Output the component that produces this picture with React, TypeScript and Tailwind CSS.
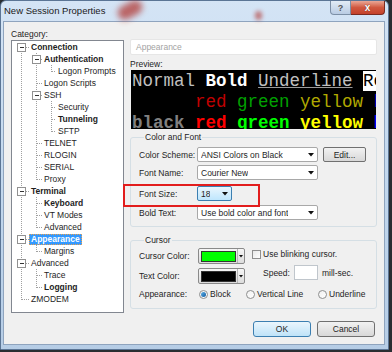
import React from "react";

type Node = {
  t: string;
  lvl: 1 | 2 | 3;
  bold?: boolean;
  exp?: boolean;
  sel?: boolean;
};

const tree: Node[] = [
  { t: "Connection", lvl: 1, bold: true, exp: true },
  { t: "Authentication", lvl: 2, bold: true, exp: true },
  { t: "Logon Prompts", lvl: 3 },
  { t: "Logon Scripts", lvl: 2 },
  { t: "SSH", lvl: 2, exp: true },
  { t: "Security", lvl: 3 },
  { t: "Tunneling", lvl: 3, bold: true },
  { t: "SFTP", lvl: 3 },
  { t: "TELNET", lvl: 2 },
  { t: "RLOGIN", lvl: 2 },
  { t: "SERIAL", lvl: 2 },
  { t: "Proxy", lvl: 2 },
  { t: "Terminal", lvl: 1, bold: true, exp: true },
  { t: "Keyboard", lvl: 2, bold: true },
  { t: "VT Modes", lvl: 2 },
  { t: "Advanced", lvl: 2 },
  { t: "Appearance", lvl: 1, bold: true, exp: true, sel: true },
  { t: "Margins", lvl: 2 },
  { t: "Advanced", lvl: 1, exp: true },
  { t: "Trace", lvl: 2 },
  { t: "Logging", lvl: 2, bold: true },
  { t: "ZMODEM", lvl: 1 },
];

const indent = { 1: "pl-[19px]", 2: "pl-[32px]", 3: "pl-[46px]" };
const lineX = { 1: 9, 2: 24, 3: 39 };
const textX = { 1: 19, 2: 32, 3: 46 };

// vertical guide lines: [x, fromY, toY]
const verticals: [number, number, number][] = [
  [9, 6, 258],
  [24, 12, 138],
  [39, 24, 30],
  [39, 60, 90],
  [24, 156, 186],
  [24, 204, 210],
  [24, 228, 246],
];

function TreeLines() {
  return (
    <svg className="pointer-events-none absolute inset-0" width="111" height="271" shapeRendering="crispEdges">
      {verticals.map(([x, a, b], i) => (
        <line key={i} x1={x + 0.5} y1={a} x2={x + 0.5} y2={b + 1} stroke="#a0a0a0" strokeDasharray="1 1" />
      ))}
      {tree.map((n, i) => {
        const cy = 6 + i * 12;
        const x = lineX[n.lvl];
        return (
          <g key={i}>
            <line x1={x + 1} y1={cy + 0.5} x2={textX[n.lvl] - 2} y2={cy + 0.5} stroke="#a0a0a0" strokeDasharray="1 1" />
            {n.exp && (
              <g>
                <rect x={x - 3.5} y={cy - 3.5} width="8" height="8" fill="#fff" stroke="#919191" />
                <line x1={x - 1} y1={cy + 0.5} x2={x + 3} y2={cy + 0.5} stroke="#333" />
              </g>
            )}
          </g>
        );
      })}
    </svg>
  );
}

function Arrow() {
  return (
    <svg width="6" height="4" viewBox="0 0 6 4">
      <path d="M0 0h6L3 3.5z" fill="#111" />
    </svg>
  );
}

function Combo({ text, w, hot }: { text: string; w: string; hot?: boolean }) {
  return (
    <div
      className={
        "flex h-[15px] items-center justify-between rounded-[2px] border pl-[3px] pr-[3px] " +
        w +
        (hot
          ? " border-[#3c7fb1] bg-gradient-to-b from-[#eaf6fd] to-[#bee6fd]"
          : " border-[#a8a8a8] bg-white")
      }
    >
      <span className="truncate">{text}</span>
      <Arrow />
    </div>
  );
}

function Swatch({ color }: { color: string }) {
  return (
    <div className="flex h-[16px] w-[47px] items-center rounded-[2px] border border-[#8a8a8a] bg-gradient-to-b from-[#f6f6f6] to-[#dcdcdc] pl-[2px]">
      <div className={"h-[11px] w-[35px] border border-[#333] " + color} />
      <div className="ml-[1px] flex h-full flex-1 items-center justify-center border-l border-[#b5b5b5]">
        <svg width="4" height="3" viewBox="0 0 4 3">
          <path d="M0 0h4L2 2.5z" fill="#111" />
        </svg>
      </div>
    </div>
  );
}

function Radio({ on }: { on?: boolean }) {
  return (
    <span className="flex h-[9px] w-[9px] items-center justify-center rounded-full border border-[#8e8f8f] bg-gradient-to-br from-[#f0f0f0] to-white">
      {on && <span className="h-[5px] w-[5px] rounded-full bg-gradient-to-br from-[#5fb3ea] to-[#0d5a9e]" />}
    </span>
  );
}

function Btn({ label, def }: { label: string; def?: boolean }) {
  return (
    <div
      className={
        "flex h-[16px] w-[58px] items-center justify-center rounded-[3px] border " +
        (def
          ? "border-[#3c7fb1] bg-gradient-to-b from-[#eaf6fd] to-[#bfe3f8]"
          : "border-[#707070] bg-gradient-to-b from-[#f2f2f2] to-[#d8d8d8]")
      }
    >
      {label}
    </div>
  );
}

export default function App() {
  return (
    <div className="h-[352px] w-[392px] overflow-hidden bg-[#2a2d31] font-['Liberation_Sans',Arial,sans-serif] text-[8.5px] leading-[12px] text-[#1e1e1e]">
      <div className="relative h-[350px] w-[389px] rounded-t-[6px] border border-[#5b7595] bg-gradient-to-b from-[#d4e4f5] via-[#c3d8ee] to-[#b6cde6]">
        {/* glass background bleed */}
        <div className="absolute left-[116px] top-[2px] h-[14px] w-[26px] rotate-[-28deg] rounded-full bg-[#b0302a] opacity-70 blur-[3px]" />
        <div className="absolute left-[254px] top-[10px] h-[9px] w-[7px] rounded-full bg-[#b0302a] opacity-60 blur-[2px]" />

        <div className="relative flex h-[20px] items-start">
          <span className="pl-[3px] pt-[4px] text-[9.5px] leading-[12px] text-[#1a1a1a]">New Session Properties</span>
          <div className="ml-auto mr-[3px] flex">
            <div className="flex h-[14px] w-[21px] items-center justify-center rounded-bl-[4px] border border-t-0 border-[#7c8fa6] bg-gradient-to-b from-[#e3ecf6] to-[#b9cce3] text-[9px] font-bold text-[#555]">
              ?
            </div>
            <div className="flex h-[14px] w-[34px] items-center justify-center rounded-br-[4px] border border-l-0 border-t-0 border-[#7a2a20] bg-gradient-to-b from-[#e9a796] via-[#d0583f] to-[#c4412a] text-[10px] font-bold text-white [text-shadow:0_0_1px_#4a120a]">
              x
            </div>
          </div>
        </div>

        <div className="ml-[2px] flex h-[324px] w-[382px] border border-[#8fa4be] bg-[#f0f0f0]">
          {/* left: category tree */}
          <div className="ml-[7px] w-[113px]">
            <div className="mt-[6px] h-[12px]">Category:</div>
            <div className="relative h-[273px] border border-[#828790] bg-white">
              <TreeLines />
              {tree.map((n, i) => (
                <div key={i} className={"relative flex h-[12px] items-center " + indent[n.lvl]}>
                  {n.sel ? (
                    <span className="-ml-[2px] h-[11px] border border-dotted border-[#e8a050] bg-[#3399ff] px-[1px] leading-[9px] font-bold text-white">
                      {n.t}
                    </span>
                  ) : (
                    <span className={n.bold ? "font-bold" : ""}>{n.t}</span>
                  )}
                </div>
              ))}
            </div>
          </div>

          {/* right: appearance page */}
          <div className="ml-[6px] w-[247px]">
            <div className="mt-[17px] flex h-[16px] items-center rounded-[2px] border border-[#e6e6e6] bg-white pl-[5px] text-[#a3a3a3]">
              Appearance
            </div>
            <div className="mt-[3px] h-[12px]">Preview:</div>
            <div className="ml-[1px] h-[59px] w-[245px] overflow-hidden whitespace-pre bg-black pl-[1px] pt-[1px] font-['Liberation_Mono','Courier_New',monospace] text-[17.5px] leading-[21px]">
              <div className="text-[#c0c0c0]">
                Normal <span className="font-bold text-white">Bold</span>{" "}
                <span className="underline decoration-[#9a9a9a]">Underline</span>{" "}
                <span className="bg-white text-black">Re</span>
              </div>
              <div>
                <span className="text-black">black</span> <span className="text-[#c00000]">red</span>{" "}
                <span className="text-[#00a000]">green</span> <span className="text-[#b0a800]">yellow</span>{" "}
                <span className="text-[#0000c0]">blue</span>
              </div>
              <div className="font-bold">
                <span className="text-[#808080]">black</span> <span className="text-[#ff0000]">red</span>{" "}
                <span className="text-[#00ff00]">green</span> <span className="text-[#ffff00]">yellow</span>{" "}
                <span className="text-[#0000ff]">blue</span>
              </div>
            </div>

            <fieldset className="mt-[2px] rounded-[3px] border border-[#d5dfe5] pb-[6px] pl-[8px]">
              <legend className="ml-[5px] px-[1px] leading-[12px]">Color and Font</legend>
              <div className="mt-[4px] flex items-center">
                <span className="w-[58px]">Color Scheme:</span>
                <Combo text="ANSI Colors on Black" w="w-[121px]" />
                <div className="ml-[5px] flex h-[15px] w-[43px] items-center justify-center rounded-[2px] border border-[#707070] bg-gradient-to-b from-[#f2f2f2] to-[#d8d8d8]">
                  Edit...
                </div>
              </div>
              <div className="mt-[3px] flex items-center">
                <span className="w-[58px]">Font Name:</span>
                <Combo text="Courier New" w="w-[121px]" />
              </div>
              <div className="mt-[6px] flex items-center">
                <span className="w-[58px]">Font Size:</span>
                <Combo text="18" w="w-[35px]" hot />
              </div>
              <div className="mt-[4px] flex items-center">
                <span className="w-[58px]">Bold Text:</span>
                <Combo text="Use bold color and font" w="w-[121px]" />
              </div>
            </fieldset>

            <fieldset className="mt-[7px] rounded-[3px] border border-[#d5dfe5] pb-[8px] pl-[8px]">
              <legend className="ml-[5px] px-[1px] leading-[12px]">Cursor</legend>
              <div className="mt-[2px] flex">
                <div className="flex flex-col">
                  <div className="flex items-center">
                    <span className="w-[59px]">Cursor Color:</span>
                    <Swatch color="bg-[#00ff00]" />
                  </div>
                  <div className="mt-[4px] flex items-center">
                    <span className="w-[59px]">Text Color:</span>
                    <Swatch color="bg-black" />
                  </div>
                </div>
                <div className="ml-[7px] flex flex-col">
                  <div className="flex h-[12px] items-center">
                    <span className="h-[9px] w-[9px] border border-[#8f8f8f] bg-gradient-to-br from-[#e8e8e8] to-white" />
                    <span className="ml-[2px]">Use blinking cursor.</span>
                  </div>
                  <div className="mt-[5px] flex items-center">
                    <span className="ml-[11px] w-[31px]">Speed:</span>
                    <span className="h-[15px] w-[24px] border border-[#c0c6cc] bg-white" />
                    <span className="ml-[4px]">mill-sec.</span>
                  </div>
                </div>
              </div>
              <div className="mt-[4px] flex h-[12px] items-center">
                <span className="w-[60px]">Appearance:</span>
                <div className="flex w-[47px] items-center gap-[2px]">
                  <Radio on />
                  <span>Block</span>
                </div>
                <div className="flex w-[72px] items-center gap-[2px]">
                  <Radio />
                  <span>Vertical Line</span>
                </div>
                <div className="flex items-center gap-[2px]">
                  <Radio />
                  <span>Underline</span>
                </div>
              </div>
            </fieldset>

            <div className="mr-[2px] mt-[12px] flex justify-end gap-[6px]">
              <Btn label="OK" def />
              <Btn label="Cancel" />
            </div>
          </div>
        </div>

        {/* red annotation box */}
        <div className="absolute left-[122px] top-[183px] h-[23px] w-[137px] border-2 border-[#e21d1d]" />
      </div>
    </div>
  );
}
